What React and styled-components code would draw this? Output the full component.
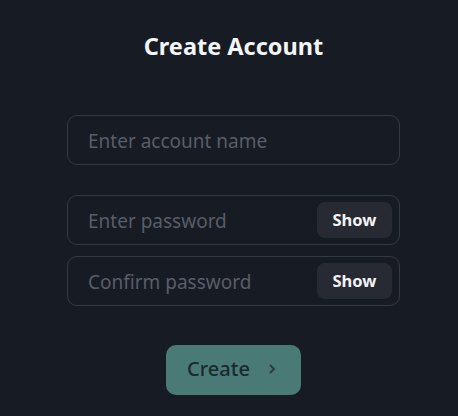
import React from "react";
import styled, { createGlobalStyle } from "styled-components";

const Global = createGlobalStyle`
  html, body { margin: 0; padding: 0; background: #171b24; }
  body { font-family: "Noto Sans", "Open Sans", sans-serif; }
  * { box-sizing: border-box; }
`;

const Page = styled.div`
  width: 458px;
  height: 416px;
  display: flex;
  flex-direction: column;
  align-items: center;
  padding: 30px 0 0 9px;
`;

const Title = styled.h1`
  margin: 0;
  font-size: 23.5px;
  line-height: 32px;
  font-weight: 700;
  color: #f4f5f7;
`;

const Form = styled.div`
  width: 333px;
  margin-top: 53px;
  display: flex;
  flex-direction: column;
`;

const Field = styled.div`
  height: 50px;
  border: 1px solid #353945;
  border-radius: 10px;
  display: flex;
  align-items: center;
  padding: 0 7px 0 20px;
  margin-top: ${(p) => p.$gap || 0}px;
`;

const Input = styled.input`
  flex: 1;
  min-width: 0;
  background: transparent;
  border: none;
  outline: none;
  font-family: inherit;
  font-size: 19px;
  color: #e6e7ea;
  padding: 0;
  margin-top: 2px;
  &::placeholder { color: #595d67; }
`;

const ShowButton = styled.button`
  width: 75px;
  height: 36px;
  border: none;
  border-radius: 8px;
  background: #272a33;
  color: #f2f3f5;
  font-family: inherit;
  font-weight: 700;
  font-size: 16.5px;
  padding: 0 0 2px;
  cursor: pointer;
`;

const CreateButton = styled.button`
  margin-top: 39px;
  width: 135px;
  height: 50px;
  border: none;
  border-radius: 10px;
  background: #4a7a76;
  color: #19292d;
  font-family: inherit;
  font-size: 20px;
  font-weight: 500;
  display: flex;
  align-items: center;
  justify-content: center;
  gap: 18px;
  padding: 0 4px 3px 0;
`;

export default function App() {
  return (
    <Page>
      <Global />
      <Title>Create Account</Title>
      <Form>
        <Field>
          <Input placeholder="Enter account name" />
        </Field>
        <Field $gap={30}>
          <Input type="password" placeholder="Enter password" />
          <ShowButton>Show</ShowButton>
        </Field>
        <Field $gap={11}>
          <Input type="password" placeholder="Confirm password" />
          <ShowButton>Show</ShowButton>
        </Field>
      </Form>
      <CreateButton>
        <span>Create</span>
        <svg width="8" height="12" viewBox="0 0 8 12" fill="none">
          <path d="M2.5 2.5l3.5 3.5-3.5 3.5" stroke="#2a3f42" strokeWidth="2" strokeLinecap="round" strokeLinejoin="round" />
        </svg>
      </CreateButton>
    </Page>
  );
}
